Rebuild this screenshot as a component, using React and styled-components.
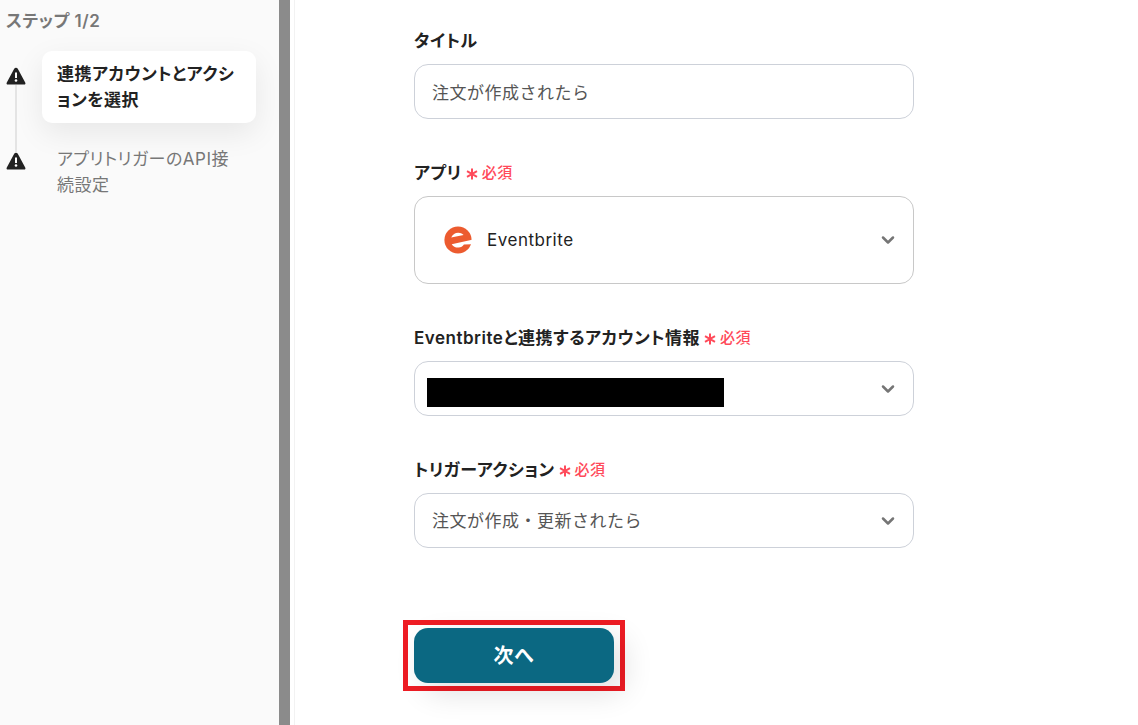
import React from "react";
import styled, { createGlobalStyle } from "styled-components";
import { ChevronDown } from "lucide-react";

const GlobalStyle = createGlobalStyle`
  *, *::before, *::after { box-sizing: border-box; }
  body {
    margin: 0;
    background: #fff;
    color: #222;
    font-family: Inter, "Noto Sans CJK JP", sans-serif;
    font-size: 17px;
    line-height: 26px;
    letter-spacing: 0.03em;
    font-feature-settings: "palt";
  }
  button, input, select {
    font: inherit;
    font-feature-settings: normal;
    letter-spacing: inherit;
    color: inherit;
  }
`;

const Page = styled.div`
  display: flex;
  min-height: 100vh;
`;

const Sidebar = styled.aside`
  flex: 0 0 279px;
  padding: 8px 23px 24px 6px;
  background: #fafafa;
`;

const StepCount = styled.p`
  margin: 0 0 17px;
  font-weight: 600;
  color: #777;
`;

const StepList = styled.ol`
  margin: 0;
  padding: 0;
  list-style: none;
`;

const Step = styled.li`
  display: flex;
  gap: 16px;
`;

const Marker = styled.div`
  display: flex;
  flex-direction: column;
  align-items: center;
  width: 20px;
  padding-top: 16px;

  svg { display: block; flex: none; }
`;

const Connector = styled.span`
  flex: 1;
  width: 2px;
  margin-bottom: -16px;
  background: #e4e4e4;
`;

const StepBody = styled.div`
  flex: 1;
  padding-bottom: ${(p) => (p.$last ? 0 : 13)}px;
`;

const StepLink = styled.a`
  display: block;
  padding: 10px 15px;
  border-radius: 10px;
  color: ${(p) => (p.$active ? "#222" : "#777")};
  font-weight: ${(p) => (p.$active ? 600 : 400)};
  text-decoration: none;
  background: ${(p) => (p.$active ? "#fff" : "transparent")};
  box-shadow: ${(p) => (p.$active ? "0 10px 30px rgba(0, 0, 0, 0.08)" : "none")};
`;

const Divider = styled.div`
  flex: 0 0 11px;
  background: #8b8b8b;
`;

const Main = styled.main`
  flex: 1;
  min-width: 0;
  margin-left: 4px;
  padding: 26px 24px 34px 119px;
  border-left: 1px solid #f2f2f2;
`;

const Form = styled.form`
  display: flex;
  flex-direction: column;
  gap: 39px;
  max-width: 500px;
`;

const Field = styled.div`
  display: flex;
  flex-direction: column;
  gap: 12px;
`;

const Label = styled.label`
  display: flex;
  align-items: center;
  gap: 4px;
  height: 26px;
  padding-top: 3px;
  font-weight: 600;
`;

const Required = styled.span`
  display: inline-flex;
  align-items: center;
  gap: 4px;
  font-size: 15px;
  font-weight: 500;
  color: #ff4a5a;

  svg { margin-top: 3px; }
`;

const TextInput = styled.input`
  width: 100%;
  height: 55px;
  padding: 0 17px;
  border: 1px solid #cdd1d9;
  border-radius: 14px;
  background: #fff;
  color: #555;
`;

const SelectBox = styled.div`
  display: grid;
  align-items: center;

  > * { grid-area: 1 / 1; }
  > svg { pointer-events: none; }
`;

const Select = styled.select`
  appearance: none;
  width: 100%;
  height: ${(p) => (p.$tall ? 88 : 55)}px;
  padding: 0 48px 0 ${(p) => (p.$tall ? 72 : 17)}px;
  border: 1px solid ${(p) => (p.$tall ? "#c8c8c8" : "#cdd1d9")};
  border-radius: 14px;
  background: #fff;
  color: ${(p) => (p.$tall ? "#222" : "#555")};
`;

const Chevron = styled(ChevronDown)`
  justify-self: end;
  margin-right: 16px;
  color: #757575;
`;

const Logo = styled.svg`
  margin-left: 30px;
`;

const Redaction = styled.span`
  width: 297px;
  height: 29px;
  margin: 7px 0 0 13px;
  background: #000;
  pointer-events: none;
`;

const Highlight = styled.div`
  align-self: flex-start;
  margin: 33px 0 0 -11px;
  padding: 3px 6px;
  border: 5px solid #ee1c24;
`;

const NextButton = styled.button`
  display: block;
  width: 200px;
  height: 55px;
  border: 0;
  border-radius: 14px;
  background: #0b6882;
  color: #fff;
  font-size: 20px;
  font-weight: 600;
  box-shadow: 10px 10px 30px rgba(0, 0, 0, 0.12);
`;

function WarningIcon() {
  return (
    <svg width="20" height="18" viewBox="0 0 20 18" aria-hidden="true">
      <path d="M8.200 1.800.8 15.400c-.6 1.100-.1 2.100 1 2.100h16.400c1.100 0 1.600-1 1-2.100L11.800 1.800c-.8-1.300-2.800-1.300-3.600 0Z" fill="#222" />
      <path d="M10 5.500v5.500" stroke="#fff" strokeWidth="2" />
      <circle cx="10" cy="13.500" r="1.300" fill="#fff" />
    </svg>
  );
}

function EventbriteLogo() {
  return (
    <Logo width="28" height="28" viewBox="0 0 28 28" aria-hidden="true">
      <circle cx="14" cy="14" r="13.600" fill="#ec5b2f" />
      <path d="M7.200 11.400C8.500 8.300 11.200 6.700 14.200 6.700c2.700 0 4.500 1 5.400 2.400Z" fill="#fff" />
      <path d="M28 13.800 7.700 18.200c1.500 2.400 4 3.600 6.900 3.400 2.300-.2 4.100-1.300 5.300-3.100L28 18.200Z" fill="#fff" />
    </Logo>
  );
}

function RequiredMark() {
  return (
    <Required>
      <svg width="12" height="12" viewBox="0 0 12 12" aria-hidden="true">
        <path d="M6 .5v11M1 3.200l10 5.600M11 3.200 1 8.800" stroke="currentColor" strokeWidth="2" />
      </svg>
      必須
    </Required>
  );
}

function SelectField({ id, label, tall, icon, options, children }) {
  return (
    <Field>
      <Label htmlFor={id}>
        {label}
        <RequiredMark />
      </Label>
      <SelectBox>
        <Select id={id} $tall={tall}>
          {options.map((o) => (
            <option key={o}>{o}</option>
          ))}
        </Select>
        {icon}
        {children}
        <Chevron size={20} strokeWidth={3} />
      </SelectBox>
    </Field>
  );
}

export default function App() {
  return (
    <>
      <GlobalStyle />
      <Page>
        <Sidebar>
          <StepCount>ステップ 1/2</StepCount>
          <StepList>
            <Step>
              <Marker>
                <WarningIcon />
                <Connector />
              </Marker>
              <StepBody>
                <StepLink href="#account" $active aria-current="step">
                  連携アカウントとアクションを選択
                </StepLink>
              </StepBody>
            </Step>
            <Step>
              <Marker>
                <WarningIcon />
              </Marker>
              <StepBody $last>
                <StepLink href="#api">アプリトリガーのAPI接続設定</StepLink>
              </StepBody>
            </Step>
          </StepList>
        </Sidebar>
        <Divider />
        <Main>
          <Form onSubmit={(e) => e.preventDefault()}>
            <Field>
              <Label htmlFor="title">タイトル</Label>
              <TextInput id="title" type="text" defaultValue="注文が作成されたら" />
            </Field>
            <SelectField id="app" label="アプリ" tall icon={<EventbriteLogo />} options={["Eventbrite"]} />
            <SelectField id="account" label="Eventbriteと連携するアカウント情報" options={[""]}>
              <Redaction />
            </SelectField>
            <SelectField id="action" label="トリガーアクション" options={["注文が作成・更新されたら"]} />
            <Highlight>
              <NextButton type="submit">次へ</NextButton>
            </Highlight>
          </Form>
        </Main>
      </Page>
    </>
  );
}
